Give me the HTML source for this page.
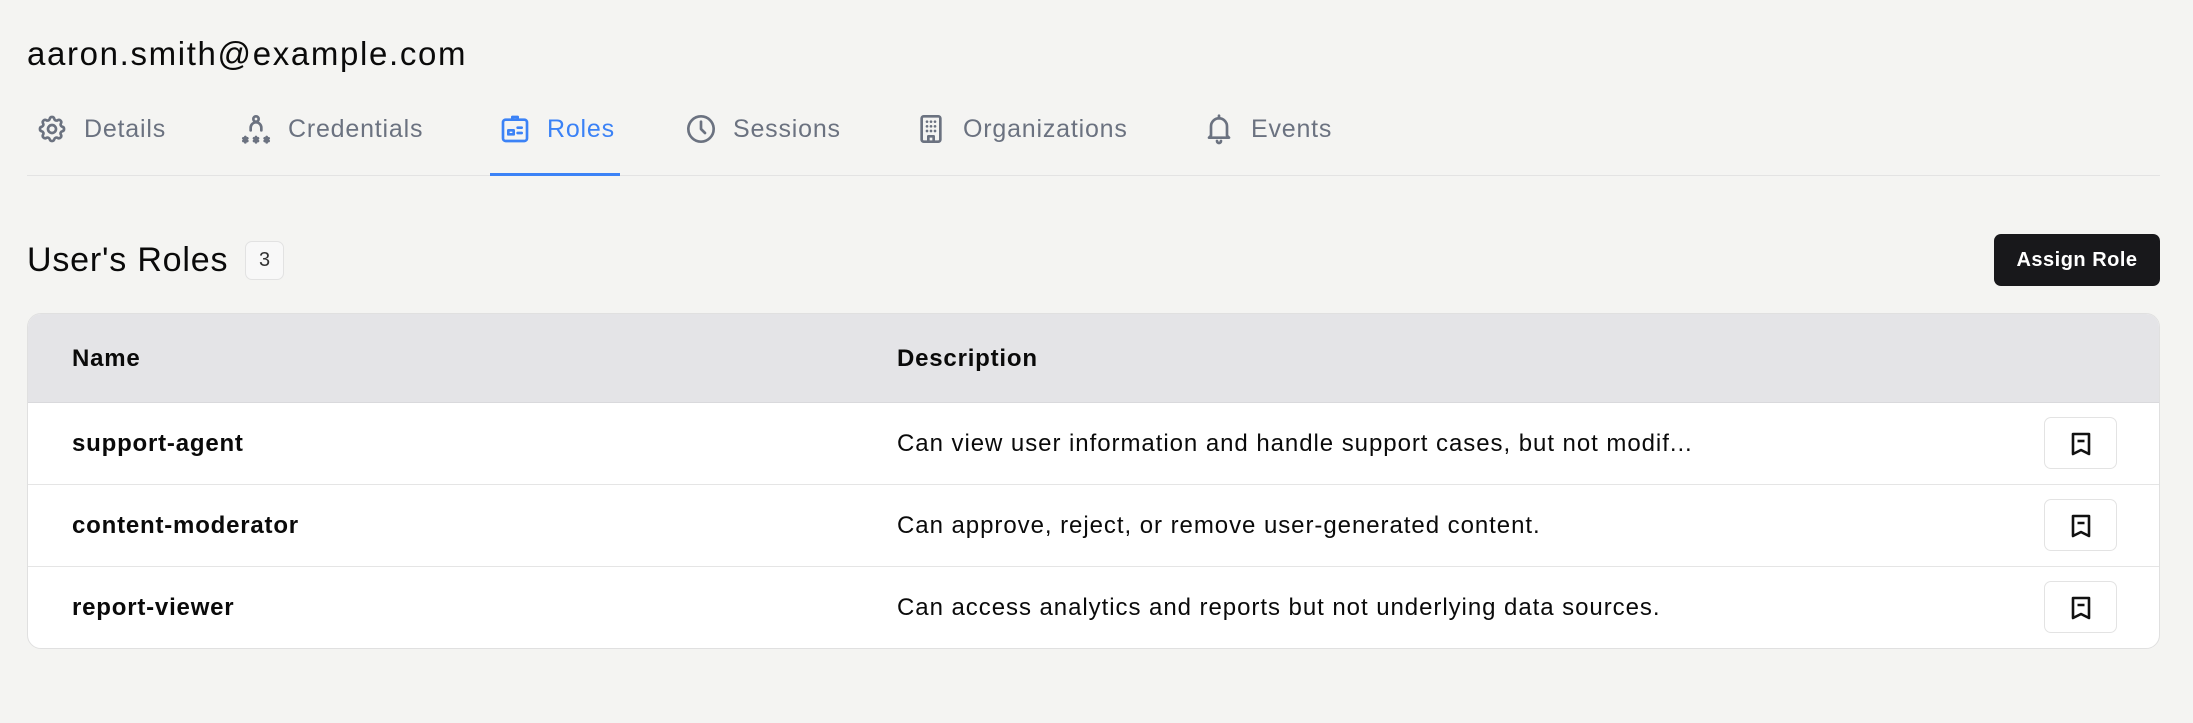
<!DOCTYPE html>
<html><head><meta charset="utf-8"><style>
*{box-sizing:border-box;margin:0;padding:0}
body{width:2193px;height:723px;background:#f4f4f2;font-family:"Liberation Sans",Arial,sans-serif;position:relative;overflow:hidden;color:#111}
.abs{position:absolute}
.email{left:27px;top:35px;font-size:33px;color:#0a0a0a;letter-spacing:1.65px}
.tab{position:absolute;top:111px;height:36px;display:flex;align-items:center;font-size:25px;color:#6b7280;letter-spacing:0.8px}
.tab svg{width:32px;height:32px;margin-right:16px;stroke:#6b7280;fill:none;stroke-width:2;stroke-linecap:round;stroke-linejoin:round}
.tab.act{color:#3b82f6}.tab.act svg{stroke:#3b82f6}
.line{left:27px;top:175px;width:2133px;height:1px;background:#e3e3e3}
.ul{left:490px;top:173px;width:130px;height:3px;background:#3b82f6}
.h{left:27px;top:241px;font-size:34px;color:#0a0a0a;letter-spacing:0.8px}
.badge{left:245px;top:241px;width:39px;height:39px;border:1px solid #e2e2e2;border-radius:7px;background:#f8f8f8;font-size:20px;color:#333;text-align:center;line-height:37px}
.btn{left:1994px;top:234px;width:166px;height:52px;background:#18181b;color:#fff;border-radius:7px;font-size:20px;font-weight:bold;text-align:center;line-height:52px;letter-spacing:0.5px}
.tbl{left:27px;top:313px;width:2133px;height:336px;background:#fff;border:1px solid #e0e0e0;border-radius:14px;overflow:hidden}
.hd{position:absolute;left:0;top:0;width:100%;height:89px;background:#e4e4e7;border-bottom:1px solid #d9d9dc}
.row{position:absolute;left:0;width:100%;height:82px;border-bottom:1px solid #e5e5e5}
.t{position:absolute;font-size:24px;color:#0a0a0a;letter-spacing:0.95px}
.b{font-weight:bold;letter-spacing:0.8px}
.ab{position:absolute;left:2016px;width:73px;height:52px;border:1px solid #e3e3e3;border-radius:7px;background:#fff}
.ab svg{position:absolute;left:25px;top:14px;width:22px;height:24px}
</style></head><body>
<div class="abs email">aaron.smith@example.com</div>
<div class="tab" style="left:36px"><svg viewBox="0 0 24 24"><path d="M10.3 4.3c.4-1.8 3-1.8 3.4 0a1.7 1.7 0 0 0 2.6 1.1c1.5-.9 3.3.8 2.4 2.4a1.7 1.7 0 0 0 1 2.5c1.8.4 1.8 3 0 3.4a1.7 1.7 0 0 0-1 2.6c.9 1.5-.9 3.3-2.4 2.4a1.7 1.7 0 0 0-2.6 1c-.4 1.8-3 1.8-3.4 0a1.7 1.7 0 0 0-2.6-1c-1.5.9-3.3-.9-2.4-2.4a1.7 1.7 0 0 0-1-2.6c-1.8-.4-1.8-3 0-3.4a1.7 1.7 0 0 0 1-2.5c-.9-1.6.9-3.3 2.4-2.4a1.7 1.7 0 0 0 2.6-1.1z"/><circle cx="12" cy="12" r="3"/></svg>Details</div>
<div class="tab" style="left:240px"><svg viewBox="0 0 24 24"><circle cx="12" cy="4.5" r="2"/><path d="M8 13v-2a4 4 0 0 1 8 0v2"/><path d="M4 18v4M2.5 19l3 2M5.5 19l-3 2M12 18v4M10.5 19l3 2M13.5 19l-3 2M20 18v4M18.5 19l3 2M21.5 19l-3 2"/></svg>Credentials</div>
<div class="tab act" style="left:499px"><svg viewBox="0 0 24 24"><rect x="3" y="5" width="18" height="16" rx="2"/><path d="M10 5V3h4v2"/><rect x="7" y="13" width="4" height="3"/><path d="M14 11h3M14 15h3"/></svg>Roles</div>
<div class="tab" style="left:685px"><svg viewBox="0 0 24 24"><circle cx="12" cy="12" r="9.5"/><path d="M12 6.5V12l3 3"/></svg>Sessions</div>
<div class="tab" style="left:915px"><svg viewBox="0 0 24 24"><rect x="5" y="2.5" width="14" height="19" rx="1.5"/><path d="M9 6.5h.01M12 6.5h.01M15 6.5h.01M9 10h.01M12 10h.01M15 10h.01M9 13.5h.01M12 13.5h.01M15 13.5h.01M10 21.5v-4h4v4"/></svg>Organizations</div>
<div class="tab" style="left:1203px"><svg viewBox="0 0 24 24"><path d="M6 17V10a6 6 0 0 1 12 0v7l1.5 1.5h-15z"/><path d="M12 2v2M10.5 21a1.5 1.5 0 0 0 3 0"/></svg>Events</div>
<div class="abs line"></div><div class="abs ul"></div>
<div class="abs h">User's Roles</div>
<div class="abs badge">3</div>
<div class="abs btn">Assign Role</div>
<div class="abs tbl">
<div class="hd"><div class="t b" style="left:44px;top:31px">Name</div><div class="t b" style="left:869px;top:31px">Description</div></div>
<div class="row" style="top:89px"><div class="t b" style="left:44px;top:27px">support-agent</div><div class="t" style="left:869px;top:27px">Can view user information and handle support cases, but not modif...</div><div class="ab" style="top:14px"><svg viewBox="0 0 22 24" fill="none" stroke="#111" stroke-width="2.6" stroke-linejoin="round"><path d="M3 2h16v20l-8-4-8 4z"/><path d="M7.5 9h7"/></svg></div></div>
<div class="row" style="top:171px"><div class="t b" style="left:44px;top:27px">content-moderator</div><div class="t" style="left:869px;top:27px">Can approve, reject, or remove user-generated content.</div><div class="ab" style="top:14px"><svg viewBox="0 0 22 24" fill="none" stroke="#111" stroke-width="2.6" stroke-linejoin="round"><path d="M3 2h16v20l-8-4-8 4z"/><path d="M7.5 9h7"/></svg></div></div>
<div class="row" style="top:253px;border-bottom:none"><div class="t b" style="left:44px;top:27px">report-viewer</div><div class="t" style="left:869px;top:27px">Can access analytics and reports but not underlying data sources.</div><div class="ab" style="top:14px"><svg viewBox="0 0 22 24" fill="none" stroke="#111" stroke-width="2.6" stroke-linejoin="round"><path d="M3 2h16v20l-8-4-8 4z"/><path d="M7.5 9h7"/></svg></div></div>
</div>
</body></html>
